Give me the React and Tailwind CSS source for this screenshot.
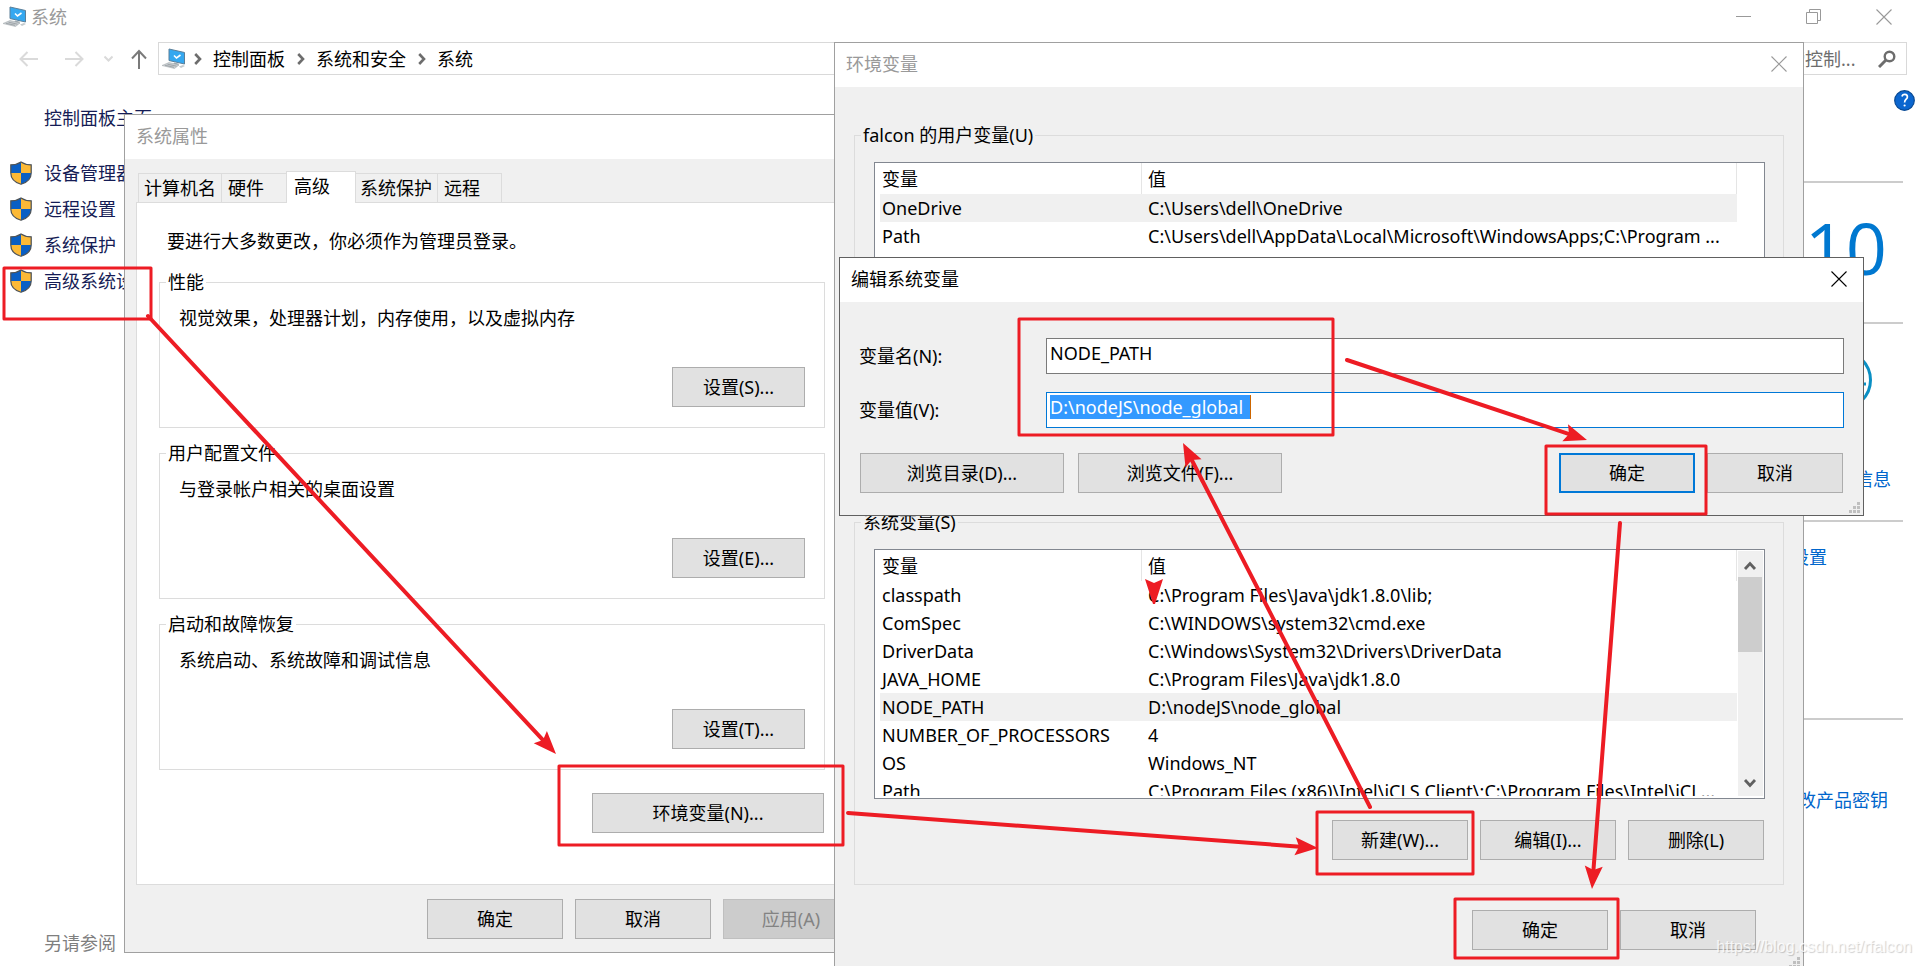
import React from "react";

const userVars = [
  { name: "OneDrive", value: "C:\\Users\\dell\\OneDrive" },
  { name: "Path", value: "C:\\Users\\dell\\AppData\\Local\\Microsoft\\WindowsApps;C:\\Program ..." },
  { name: "TEMP", value: "C:\\Users\\dell\\AppData\\Local\\Temp" },
];

const systemVars = [
  { name: "classpath", value: "C:\\Program Files\\Java\\jdk1.8.0\\lib;" },
  { name: "ComSpec", value: "C:\\WINDOWS\\system32\\cmd.exe" },
  { name: "DriverData", value: "C:\\Windows\\System32\\Drivers\\DriverData" },
  { name: "JAVA_HOME", value: "C:\\Program Files\\Java\\jdk1.8.0" },
  { name: "NODE_PATH", value: "D:\\nodeJS\\node_global" },
  { name: "NUMBER_OF_PROCESSORS", value: "4" },
  { name: "OS", value: "Windows_NT" },
  { name: "Path", value: "C:\\Program Files (x86)\\Intel\\iCLS Client\\;C:\\Program Files\\Intel\\iCL..." },
];

const settings = [
  { title: "性能", text: "视觉效果，处理器计划，内存使用，以及虚拟内存", button: "设置(S)..." },
  { title: "用户配置文件", text: "与登录帐户相关的桌面设置", button: "设置(E)..." },
  { title: "启动和故障恢复", text: "系统启动、系统故障和调试信息", button: "设置(T)..." },
];

const ComputerIcon = () => (
  <svg className="w-6 h-[22px] shrink-0" viewBox="0 0 24 22">
    <path d="M7 1 L22.500 4.500 V16 L7 12.500 Z" fill="#35a8f0" stroke="#5b7f99" strokeWidth="1" />
    <path d="M12 7.500 l2.500 2.500 l4 -3" fill="none" stroke="#fff" strokeWidth="1.600" />
    <path d="M12 14.500 l5 1.200 l-1 2 l-5 -1 Z" fill="#9aa7ae" />
    <path d="M0 17.500 L7 14.500 L17 17 L12.500 20.500 Z" fill="#c9ced1" stroke="#a8aeb2" strokeWidth="0.600" />
    <path d="M3 17.300 l9 2 M5.500 16.200 l9 2" stroke="#8d9498" strokeWidth="0.700" />
    <path d="M17 18.500 l4 -1.500 l2 1 l-4 2 Z" fill="#c4cacd" />
  </svg>
);

const ShieldIcon = () => (
  <svg className="w-[22px] h-6 shrink-0" viewBox="0 0 22 24">
    <path d="M11 1 C8 3 4.500 3.800 0.800 3.800 V12 C0.800 17.500 5 21.500 11 23.300 Z" fill="#fcb936" />
    <path d="M11 1 C14 3 17.500 3.800 21.200 3.800 V12 C21.200 17.500 17 21.500 11 23.300 Z" fill="#0a5fc4" />
    <path d="M11 1 C8 3 4.500 3.800 0.800 3.800 V12 H11 Z" fill="#0a5fc4" />
    <path d="M11 1 C14 3 17.500 3.800 21.200 3.800 V12 H11 Z" fill="#fcb936" />
    <path d="M11 1 C14 3 17.500 3.800 21.200 3.800 V12 C21.200 17.500 17 21.500 11 23.300 C5 21.500 0.800 17.500 0.800 12 V3.800 C4.500 3.800 8 3 11 1 Z" fill="none" stroke="#4e5357" strokeWidth="1.200" />
  </svg>
);

const CloseIcon = () => (
  <svg className="w-4 h-4" viewBox="0 0 16 16" fill="none" stroke="currentColor" strokeWidth="1.100">
    <path d="M0.500 0.500 L15.500 15.500 M15.500 0.500 L0.500 15.500" />
  </svg>
);

const Crumb = ({ children }) => (
  <>
    <svg className="w-2 h-3 ml-2 mr-[7px] shrink-0" viewBox="0 0 8 12" fill="none" stroke="#6d6d6d" strokeWidth="2.600">
      <path d="M1.200 1 L6 6 L1.200 11" />
    </svg>
    <a href="#" className="px-1">{children}</a>
  </>
);

const Grip = () => (
  <svg className="absolute right-[3px] bottom-[2px] w-[11px] h-[11px]" viewBox="0 0 11 11" fill="#bfbfbf">
    <path d="M8 0h3v3h-3z M4 4h3v3h-3z M8 4h3v3h-3z M0 8h3v3h-3z M4 8h3v3h-3z M8 8h3v3h-3z" />
  </svg>
);

const Button = ({ children, className = "w-[136px]" }) => (
  <button type="button" className={`h-10 shrink-0 border border-[#adadad] bg-[#e1e1e1] text-center ${className}`}>{children}</button>
);

const TitleBar = ({ children, className = "text-[#999999]" }) => (
  <div className={`flex h-11 items-center justify-between bg-white pb-0.5 pl-[11px] pr-4 ${className}`}>
    <h2>{children}</h2>
    <button type="button" aria-label="关闭">
      <CloseIcon />
    </button>
  </div>
);

const VariableGroup = ({ title, rows, selected, buttons, scroll }) => (
  <fieldset className="border border-[#dcdcdc]">
    <legend className="ml-1.5 px-0.5">{title}</legend>
    <div className="mt-[15px] pl-[19px] pr-[18px] pb-6">
      <div className="flex h-[250px] border border-[#828790] bg-white pb-0.5 pl-[5px]">
        <div className="min-w-0 flex-1 overflow-hidden">
          <table className="w-full table-fixed border-separate border-spacing-0 text-left">
            <thead>
              <tr className="h-[31px]">
                <th className="w-[262px] border-r border-[#e5e5e5] pl-0.5 font-normal">变量</th>
                <th className="border-r border-[#e5e5e5] pl-1.5 font-normal">值</th>
              </tr>
            </thead>
            <tbody>
              {rows.map((row) => (
                <tr key={row.name} className={row.name === selected ? "h-7 bg-[#f0f0f0]" : "h-7"}>
                  <td className="whitespace-nowrap pl-0.5">{row.name}</td>
                  <td className="whitespace-nowrap pl-1.5">{row.value}</td>
                </tr>
              ))}
            </tbody>
          </table>
        </div>
        <div className="flex w-[27px] shrink-0 px-px pt-px">
          {scroll && (
            <div className="flex w-full flex-col bg-[#f0f0f0] text-[#606060]">
              <svg className="h-[26px] w-6" viewBox="0 0 24 26" fill="none" stroke="currentColor" strokeWidth="2.800">
                <path d="M7 18 L12 12.500 L17 18" />
              </svg>
              <div className="h-[75px] w-6 bg-[#cdcdcd]"></div>
              <svg className="mt-auto h-[26px] w-6" viewBox="0 0 24 26" fill="none" stroke="currentColor" strokeWidth="2.800">
                <path d="M7 10 L12 15.500 L17 10" />
              </svg>
            </div>
          )}
        </div>
      </div>
      <div className="mt-[21px] flex justify-end gap-3 pr-px">
        {buttons.map((label) => (
          <Button key={label}>{label}</Button>
        ))}
      </div>
    </div>
  </fieldset>
);

// Line with an arrowhead, from (x1, y1) to the tip at (x2, y2)
const Arrow = ({ x1, y1, x2, y2 }) => {
  const length = Math.hypot(x2 - x1, y2 - y1);
  const angle = (Math.atan2(y2 - y1, x2 - x1) * 180) / Math.PI;
  return (
    <g transform={`translate(${x1} ${y1}) rotate(${angle})`}>
      <line x1="0" y1="0" x2={length - 18} y2="0" strokeWidth="4" strokeLinecap="round" />
      <path d="M0 0 L-23 9 L-19 0 L-23 -9 Z" transform={`translate(${length} 0)`} fill="#ed1c24" stroke="none" />
    </g>
  );
};

const ControlPanel = () => (
  <div className="flex min-h-screen flex-col">
    <header className="flex h-[34px] items-center text-[#999999]">
      <div className="flex items-center gap-1 pl-[3px]">
        <ComputerIcon />
        <h1>系统</h1>
      </div>
      <div className="ml-auto flex gap-[54px] pr-[28px]">
        <button aria-label="最小化">
          <svg className="h-4 w-4" viewBox="0 0 16 16" stroke="currentColor"><path d="M0 7.500 H15" /></svg>
        </button>
        <button aria-label="还原">
          <svg className="h-4 w-4" viewBox="0 0 16 16" fill="none" stroke="currentColor">
            <path d="M0.500 3.500 h11 v11 h-11 z M3.500 3.500 v-3 h11 v11 h-3" />
          </svg>
        </button>
        <button aria-label="关闭"><CloseIcon /></button>
      </div>
    </header>

    <nav className="mt-2 flex h-[33px] items-center pl-[19px] pr-[13px]">
      <button aria-label="后退">
        <svg className="h-4 w-5" viewBox="0 0 20 16" fill="none" stroke="#dadada" strokeWidth="2"><path d="M19 8 H1.500 M8.500 1 L1.500 8 L8.500 15" /></svg>
      </button>
      <button aria-label="前进" className="ml-[26px]">
        <svg className="h-4 w-5" viewBox="0 0 20 16" fill="none" stroke="#dadada" strokeWidth="2"><path d="M0 8 H17.500 M10.500 1 L17.500 8 L10.500 15" /></svg>
      </button>
      <button aria-label="最近" className="ml-[19px]">
        <svg className="h-2 w-[9px]" viewBox="0 0 9 8" fill="none" stroke="#dadada" strokeWidth="2"><path d="M0.500 1.500 L4.500 5.500 L8.500 1.500" /></svg>
      </button>
      <button aria-label="向上" className="ml-[18px]">
        <svg className="h-5 w-4" viewBox="0 0 16 20" fill="none" stroke="#7a7a7a" strokeWidth="2"><path d="M8 20 V2 M1 9.500 L8 2 L15 9.500" /></svg>
      </button>
      <div className="ml-[11px] flex h-full flex-1 items-center border border-[#d9d9d9] pl-[3px]">
        <ComputerIcon />
        <Crumb>控制面板</Crumb>
        <Crumb>系统和安全</Crumb>
        <Crumb>系统</Crumb>
      </div>
      <div className="ml-[11px] flex h-full w-[149px] items-center border border-[#d9d9d9] px-[10px]">
        <input aria-label="搜索" placeholder="搜索控制..." className="min-w-0 flex-1 outline-none placeholder:text-[#6d6d6d]" />
        <svg className="h-[18px] w-[18px] shrink-0" viewBox="0 0 18 18" fill="none" stroke="#6d6d6d">
          <circle cx="11.500" cy="6.500" r="4.800" strokeWidth="2.400" />
          <path d="M8 10 L1 17" strokeWidth="3" />
        </svg>
      </div>
    </nav>

    <div className="flex flex-1">
      <aside className="flex w-[250px] flex-col pb-[11px] text-[#151c55]">
        <a href="#" className="mt-[31px] pl-[44px]">控制面板主页</a>
        <ul className="mt-[25px]">
          {["设备管理器", "远程设置", "系统保护", "高级系统设置"].map((item) => (
            <li key={item} className="flex h-9 items-center gap-3 pl-[10px]">
              <ShieldIcon />
              <a href="#">{item}</a>
            </li>
          ))}
        </ul>
        <p className="mt-auto pl-[44px] text-[#7f7f7f]">另请参阅</p>
      </aside>

      <main className="flex flex-1 flex-col pr-[17px] pt-[15px] text-right text-[#0066cc]">
        <button aria-label="帮助" className="-mr-3 h-[21px] w-[21px] self-end">
          <svg className="h-[21px] w-[21px]" viewBox="0 0 21 21">
            <circle cx="10.500" cy="10.500" r="9.800" fill="#0b66cf" stroke="#0a4a93" strokeWidth="1.200" />
            <path d="M8 6.500 C8.500 3.500 13.500 3.500 13.400 7 C13.300 9.300 10.600 9.300 10.600 12.500" fill="none" stroke="#fff" strokeWidth="1.700" />
            <circle cx="10.600" cy="15.500" r="1.100" fill="#fff" />
          </svg>
        </button>
        <section className="mt-[70px] h-[141px] border-t-2 border-[#cccccc] pr-4 pt-4">
          <p className="font-['Open_Sans'] text-[72px] leading-[96px] text-[#0078d0]">Windows 10</p>
        </section>
        <section className="h-[198px] border-t-2 border-[#cccccc] pr-3">
          <svg className="ml-auto mr-[19px] mt-[26px] h-[60px] w-[60px]" viewBox="0 0 60 60" fill="none" stroke="#0a8fc4" strokeWidth="3">
            <circle cx="30" cy="30" r="28.500" />
            <path d="M48 34 h6" />
          </svg>
          <a href="#" className="mt-[57px] block">支持信息</a>
        </section>
        <section className="h-[198px] border-t-2 border-[#cccccc] pr-[76px] pt-[23px]">
          <a href="#">更改设置</a>
        </section>
        <section className="border-t-2 border-[#cccccc] pr-[15px] pt-[68px]">
          <a href="#">更改产品密钥</a>
        </section>
      </main>
    </div>
  </div>
);

const SystemProperties = () => (
  <div className="absolute left-[124px] top-[114px] w-[748px] border border-[#a0a0a0] bg-[#f0f0f0]">
    <TitleBar>系统属性</TitleBar>
    <div className="pb-[13px] pl-[11px] pr-3 pt-3">
      <div role="tablist" className="flex items-end pl-0.5">
        <button role="tab" className="h-[29px] w-[84px] border border-b-0 border-[#dcdcdc] pl-[5px] text-left">计算机名</button>
        <button role="tab" className="h-[29px] w-[64px] border-t border-[#dcdcdc] pl-1.5 text-left">硬件</button>
        <button role="tab" aria-selected="true" className="relative -mb-px h-8 w-[70px] border border-b-0 border-[#dcdcdc] bg-white pb-1 pl-[7px] text-left">高级</button>
        <button role="tab" className="h-[29px] w-[82px] border-r border-t border-[#dcdcdc] pl-1 text-left">系统保护</button>
        <button role="tab" className="h-[29px] w-[64px] border-r border-t border-[#dcdcdc] pl-1.5 text-left">远程</button>
      </div>
      <div className="h-[683px] border border-[#dcdcdc] bg-white pl-[22px] pr-[33px] pt-[26px]">
        <p className="pl-2">要进行大多数更改，你必须作为管理员登录。</p>
        <div className="mt-[17px] flex flex-col gap-[13px]">
          {settings.map((group) => (
            <fieldset key={group.title} className="border border-[#dcdcdc]">
              <legend className="ml-1.5 px-0.5">{group.title}</legend>
              <div className="flex flex-col px-[19px] pb-5 pt-3">
                <p>{group.text}</p>
                <Button className="mt-[37px] w-[133px] self-end">{group.button}</Button>
              </div>
            </fieldset>
          ))}
        </div>
        <div className="mt-[23px] flex justify-end pr-px">
          <Button className="w-[232px]">环境变量(N)...</Button>
        </div>
      </div>
      <div className="mt-[14px] flex justify-end gap-3">
        <Button>确定</Button>
        <Button>取消</Button>
        <button disabled className="h-10 w-[136px] border border-[#bfbfbf] bg-[#cccccc] text-[#838383]">应用(A)</button>
      </div>
    </div>
  </div>
);

const EnvironmentVariables = () => (
  <div className="absolute left-[834px] top-[42px] w-[970px] border border-[#a0a0a0] bg-[#f0f0f0]">
    <TitleBar>环境变量</TitleBar>
    <div className="px-[19px] pb-[20px] pt-9">
      <div className="flex flex-col gap-3">
        <VariableGroup
          title="falcon 的用户变量(U)"
          rows={userVars}
          selected="OneDrive"
          buttons={["新建(N)...", "编辑(E)...", "删除(D)"]}
        />
        <VariableGroup
          title="系统变量(S)"
          rows={systemVars}
          selected="NODE_PATH"
          buttons={["新建(W)...", "编辑(I)...", "删除(L)"]}
          scroll
        />
      </div>
      <div className="mt-[25px] flex justify-end gap-3 pr-7">
        <Button>确定</Button>
        <Button>取消</Button>
      </div>
    </div>
    <Grip />
  </div>
);

const EditVariable = () => (
  <div className="absolute left-[839px] top-[257px] w-[1025px] border border-[#606060] bg-[#f0f0f0]">
    <TitleBar className="text-black">编辑系统变量</TitleBar>
    <form className="px-[19px] pb-[22px] pt-9">
      <div className="flex items-center">
        <label htmlFor="var-name" className="w-[187px]">变量名(N):</label>
        <div className="flex h-9 flex-1 items-start border border-[#7a7a7a] bg-white pl-[3px] pt-0.5">
          <input id="var-name" defaultValue="NODE_PATH" className="h-6 w-full outline-none" />
        </div>
      </div>
      <div className="mt-[18px] flex items-center">
        <label htmlFor="var-value" className="w-[187px]">变量值(V):</label>
        <div className="flex h-9 flex-1 items-start border border-[#0078d7] bg-white pl-[3px] pt-0.5">
          <input id="var-value" defaultValue="D:\nodeJS\node_global" className="h-6 w-[201px] border-r border-[#cc6600] bg-[#3399ff] text-white outline-none" />
        </div>
      </div>
      <div className="mt-[25px] flex px-px">
        <Button className="w-[204px]">浏览目录(D)...</Button>
        <Button className="ml-3.5 w-[204px]">浏览文件(F)...</Button>
        <button type="button" className="ml-auto h-10 w-[136px] border-2 border-[#0078d7] bg-[#e1e1e1]">确定</button>
        <Button className="ml-3 w-[136px]">取消</Button>
      </div>
    </form>
    <Grip />
  </div>
);

const Annotations = () => (
  <svg className="pointer-events-none absolute inset-0 h-full w-full" fill="none" stroke="#ed1c24" strokeWidth="3" strokeLinejoin="round">
    <rect x="4" y="268" width="147" height="51" />
    <rect x="559" y="766" width="284" height="79" />
    <rect x="1019" y="319" width="314" height="116" />
    <rect x="1546" y="446" width="160" height="68" />
    <rect x="1317" y="812" width="156" height="62" />
    <rect x="1455" y="899" width="163" height="59" />
    <Arrow x1={148} y1={316} x2={556} y2={754} />
    <Arrow x1={848} y1={813} x2={1318} y2={848} />
    <Arrow x1={1370} y1={807} x2={1183} y2={443} />
    <Arrow x1={1347} y1={360} x2={1587} y2={440} />
    <Arrow x1={1620} y1={523} x2={1592} y2={889} />
    <path d="M1145 579 L1154 583 L1163 579 L1155 604 L1153 604 Z" fill="#ed1c24" stroke="none" />
  </svg>
);

const App = () => {
  return (
    <div className="relative h-screen overflow-hidden bg-white font-['Noto_Sans','Noto_Sans_CJK_SC',sans-serif] text-[18px] leading-6 text-black">
      <ControlPanel />
      <SystemProperties />
      <EnvironmentVariables />
      <EditVariable />
      <Annotations />
      <p className="absolute bottom-[7px] right-2 font-['Liberation_Sans'] text-[16px] text-white/80 [text-shadow:1px_1px_1px_rgba(0,0,0,0.2)]">
        https://blog.csdn.net/rfalcon
      </p>
    </div>
  );
};

export default App;
